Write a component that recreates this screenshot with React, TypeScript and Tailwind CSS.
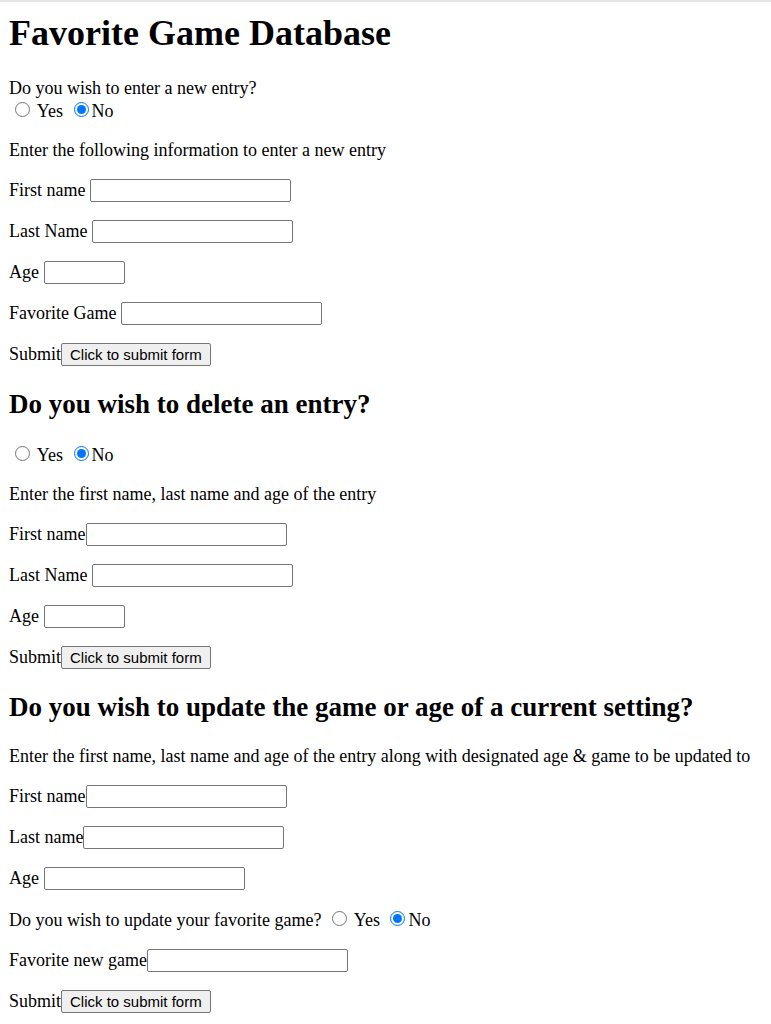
const TextBox = ({ wide = true }: { wide?: boolean }) => (
  <input
    type="text"
    className={
      wide
        ? "h-[23px] w-[201px] rounded-[2px] border border-[#767676] bg-white px-[2px] font-['Liberation_Sans',sans-serif] text-[15px]"
        : "h-[23px] w-[81px] rounded-[2px] border border-[#767676] bg-white px-[2px] font-['Liberation_Sans',sans-serif] text-[15px]"
    }
  />
)

const Radio = ({ name, checked }: { name: string; checked?: boolean }) => (
  <input
    type="radio"
    name={name}
    defaultChecked={checked}
    className="mt-[3px] mr-[3px] ml-[6px] h-[15px] w-[15px] accent-[#0075ff]"
  />
)

const SubmitButton = () => (
  <button
    type="button"
    className="h-[23px] rounded-[2px] border border-[#767676] bg-[#efefef] px-[8px] font-['Liberation_Sans',sans-serif] text-[15px] leading-[normal] text-black"
  >
    Click to submit form
  </button>
)

const App = () => {
  return (
    <div className="min-h-[1024px] bg-white font-['Liberation_Serif','Times_New_Roman',serif] text-[18px] leading-[normal] text-black">
      <div className="h-[2px] bg-[#e4e4e4]"></div>
      <div className="px-[9px]">
        <h1 className="mt-[10px] mb-[24px] text-[36px] font-bold leading-[normal]">Favorite Game Database</h1>

        <form>
          Do you wish to enter a new entry?
          <br />
          <Radio name="new" /> Yes <Radio name="new" checked />No
          <p className="my-[18px]">Enter the following information to enter a new entry</p>
          <p className="my-[18px]">
            First name <TextBox />
          </p>
          <p className="my-[18px]">
            Last Name <TextBox />
          </p>
          <p className="my-[18px]">
            Age <TextBox wide={false} />
          </p>
          <p className="my-[18px]">
            Favorite Game <TextBox />
          </p>
          <p className="my-[18px]">
            Submit<SubmitButton />
          </p>

          <h2 className="my-[23px] text-[27px] font-bold leading-[normal]">Do you wish to delete an entry?</h2>
          <p className="my-[18px]">
            <Radio name="del" /> Yes <Radio name="del" checked />No
          </p>
          <p className="my-[18px]">Enter the first name, last name and age of the entry</p>
          <p className="my-[18px]">
            First name<TextBox />
          </p>
          <p className="my-[18px]">
            Last Name <TextBox />
          </p>
          <p className="my-[18px]">
            Age <TextBox wide={false} />
          </p>
          <p className="my-[18px]">
            Submit<SubmitButton />
          </p>

          <h2 className="my-[23px] text-[27px] font-bold leading-[normal]">
            Do you wish to update the game or age of a current setting?
          </h2>
          <p className="my-[18px]">
            Enter the first name, last name and age of the entry along with designated age &amp; game to be updated to
          </p>
          <p className="my-[18px]">
            First name<TextBox />
          </p>
          <p className="my-[18px]">
            Last name<TextBox />
          </p>
          <p className="my-[18px]">
            Age <TextBox />
          </p>
          <p className="my-[18px]">
            Do you wish to update your favorite game? <Radio name="upd" /> Yes <Radio name="upd" checked />No
          </p>
          <p className="my-[18px]">
            Favorite new game<TextBox />
          </p>
          <p className="my-[18px]">
            Submit<SubmitButton />
          </p>
        </form>
      </div>
    </div>
  )
}

export default App
